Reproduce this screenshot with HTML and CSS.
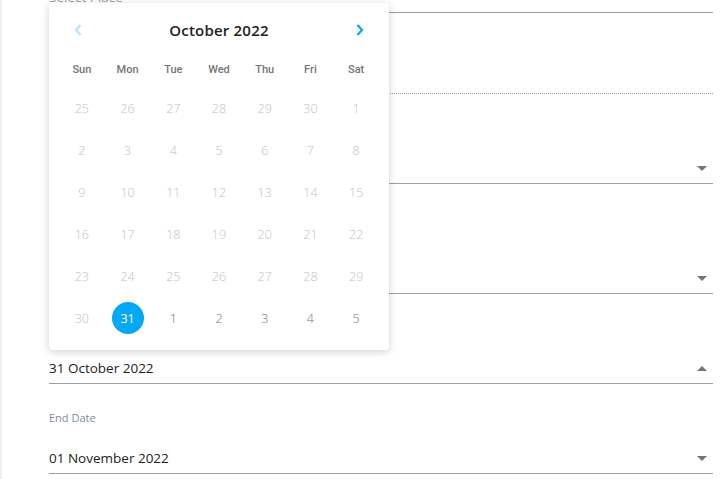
FILE: index.html
```html
<!DOCTYPE html>
<html lang="en">
<head>
  <meta charset="UTF-8">
  <title>Event Dates</title>
  <meta name="viewport" content="width=device-width, initial-scale=1.0">
  <link rel="stylesheet" href="styles.css">
</head>
<body>
  <div class="page">
    <div class="form">
      <div class="field">
        <label class="label">Place</label>
        <div class="value placeholder">Select Place</div>
      </div>

      <div class="field field-disabled">
        <label class="label">Address</label>
        <div class="value"></div>
      </div>

      <div class="field">
        <label class="label">Category</label>
        <div class="value">
          <span></span>
          <span class="arrow"></span>
        </div>
      </div>

      <div class="field field-spaced">
        <label class="label">Status</label>
        <div class="value">
          <span></span>
          <span class="arrow"></span>
        </div>
      </div>

      <div class="field">
        <label class="label">Start Date</label>
        <div class="value">
          <span>31 October 2022</span>
          <span class="arrow arrow-up"></span>
        </div>
      </div>

      <div class="field">
        <label class="label">End Date</label>
        <div class="value">
          <span>01 November 2022</span>
          <span class="arrow"></span>
        </div>
      </div>
    </div>

    <div class="calendar">
      <div class="cal-head">
        <button class="nav nav-prev">
          <svg width="8" height="12" viewBox="0 0 8 12"><path d="M6.5 1 L2 6 L6.5 11" fill="none" stroke="currentColor" stroke-width="2.2"/></svg>
        </button>
        <div class="cal-title">October 2022</div>
        <button class="nav">
          <svg width="8" height="12" viewBox="0 0 8 12"><path d="M1.5 1 L6 6 L1.5 11" fill="none" stroke="currentColor" stroke-width="2.2"/></svg>
        </button>
      </div>
      <div class="weekdays">
        <span>Sun</span><span>Mon</span><span>Tue</span><span>Wed</span><span>Thu</span><span>Fri</span><span>Sat</span>
      </div>
      <div class="days">
        <span class="off">25</span><span class="off">26</span><span class="off">27</span><span class="off">28</span><span class="off">29</span><span class="off">30</span><span class="off">1</span>
        <span class="off">2</span><span class="off">3</span><span class="off">4</span><span class="off">5</span><span class="off">6</span><span class="off">7</span><span class="off">8</span>
        <span class="off">9</span><span class="off">10</span><span class="off">11</span><span class="off">12</span><span class="off">13</span><span class="off">14</span><span class="off">15</span>
        <span class="off">16</span><span class="off">17</span><span class="off">18</span><span class="off">19</span><span class="off">20</span><span class="off">21</span><span class="off">22</span>
        <span class="off">23</span><span class="off">24</span><span class="off">25</span><span class="off">26</span><span class="off">27</span><span class="off">28</span><span class="off">29</span>
        <span class="off">30</span><span class="selected"><b>31</b></span><span>1</span><span>2</span><span>3</span><span>4</span><span>5</span>
      </div>
    </div>
  </div>
</body>
</html>
```

FILE: styles.css
```css
body {
  margin: 0;
  background: #fff;
  font-family: "Open Sans", "Liberation Sans", sans-serif;
  color: #222;
  overflow: hidden;
}
.page {
  position: relative;
  display: flow-root;
  border-left: 2px solid #eef0f5;
  padding: 0 15px 0 47px;
  height: 479px;
}
.form {
  margin-top: -77px;
}
.field {
  padding-top: 26px;
  border-bottom: 1px solid #9e9e9e;
}
.field-spaced {
  padding-top: 46px;
}
.label {
  display: block;
  font-size: 11px;
  font-weight: 500;
  line-height: 16px;
  color: #7f8a9c;
}
.value {
  display: flex;
  justify-content: space-between;
  align-items: center;
  margin-top: 20px;
  padding-bottom: 3px;
  font-size: 13.5px;
  line-height: 24px;
  height: 24px;
}
.placeholder {
  color: #9e9e9e;
}
.field-disabled {
  border-bottom: 1px dotted #9e9e9e;
}
.field-disabled .value {
  margin-top: 11px;
}
.arrow {
  width: 0;
  height: 0;
  margin-right: 6px;
  border-left: 5px solid transparent;
  border-right: 5px solid transparent;
  border-top: 5px solid #757575;
}
.arrow-up {
  border-top: none;
  border-bottom: 5px solid #757575;
}

/* date picker popup */
.calendar {
  position: absolute;
  top: 3px;
  left: 47px;
  width: 320px;
  height: 336px;
  padding: 0 10px 11px;
  background: #fff;
  border-radius: 4px;
  box-shadow: 0 2px 8px rgba(0, 0, 0, 0.18);
}
.cal-head {
  display: flex;
  justify-content: space-between;
  align-items: center;
  height: 54px;
  padding: 0 12px;
}
.nav {
  width: 14px;
  height: 14px;
  padding: 0;
  border: none;
  background: none;
  color: #03a9f4;
  display: flex;
  align-items: center;
  justify-content: center;
}
.nav-prev {
  color: #b3e5fc;
}
.cal-title {
  font-size: 15px;
  font-weight: 600;
  letter-spacing: 0.2px;
  color: #222;
}
.weekdays, .days {
  display: grid;
  grid-template-columns: repeat(7, 1fr);
  text-align: center;
}
.weekdays {
  height: 26px;
  line-height: 26px;
  margin-bottom: 4px;
  font-family: Roboto, sans-serif;
  font-size: 11px;
  font-weight: 500;
  color: #757575;
}
.days span {
  height: 42px;
  display: flex;
  align-items: center;
  justify-content: center;
  font-size: 12.5px;
  font-weight: 300;
  color: #757575;
}
.days .off {
  color: #c2c2c2;
}
.days .selected b {
  width: 32px;
  height: 32px;
  border-radius: 50%;
  background: #03a9f4;
  color: #fff;
  font-weight: 400;
  display: flex;
  align-items: center;
  justify-content: center;
}
```
